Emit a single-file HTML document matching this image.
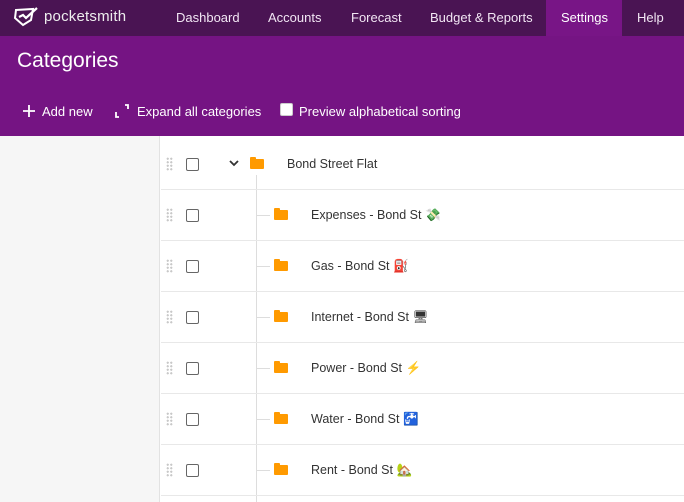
<!DOCTYPE html>
<html><head><style>
*{box-sizing:border-box;margin:0;padding:0}
body{width:684px;height:502px;overflow:hidden;font-family:"Liberation Sans",sans-serif;background:#fff;position:relative}
.nav{position:absolute;top:0;left:0;width:684px;height:36px;background:#4a1453;color:#f2e6f4;font-size:13px}
.nav span{position:absolute;top:10px}
.set{position:absolute;left:546px;top:0;width:76px;height:36px;background:#781586}
.hdr{position:absolute;top:36px;left:0;width:684px;height:100px;background:#751483;color:#fff}
.side{position:absolute;top:136px;left:0;width:160px;height:366px;background:#f6f6f6;border-right:1px solid #e2e2e2}
.row{position:absolute;left:161px;width:523px;height:51px;border-bottom:1px solid #e8e8e8;font-size:12.5px;color:#333}
.grip{position:absolute;left:5px;top:18px;width:7px;height:14px;background-image:radial-gradient(circle,#c8c8c8 1px,transparent 1.2px);background-size:3.5px 3.5px}
.cb{position:absolute;left:25px;top:19px;width:13px;height:13px;border:1px solid #666;border-radius:2px;background:#fff}
.fold{position:absolute;top:20px;width:14px;height:10px;background:#ff9a00;border-radius:1px}
.fold:before{content:"";position:absolute;left:0;top:-2px;width:6px;height:3px;background:#ff9a00;border-radius:1px 1px 0 0}
.t{position:absolute;top:18px}
.conn{position:absolute;left:95px;top:25px;width:14px;height:1px;background:#ddd}
</style></head><body>
<div class="nav">
<div class="set"></div>
<svg style="position:absolute;left:13px;top:6px" width="28" height="22" viewBox="0 0 28 22"><path d="M3 4 L20 3 L18 14 L10 19 L2 12 Z" fill="none" stroke="#fff" stroke-width="2"/><path d="M6 11 L10 9 L13 12 L24 2" fill="none" stroke="#fff" stroke-width="2.2"/></svg>
<span style="left:44px;top:8px;font-size:15px;color:#eee;letter-spacing:0.2px">pocketsmith</span>
<span style="left:176px">Dashboard</span><span style="left:268px">Accounts</span><span style="left:351px">Forecast</span><span style="left:430px">Budget &amp; Reports</span><span style="left:561px;color:#fff">Settings</span><span style="left:637px">Help</span>
</div>
<div class="hdr">
<div style="position:absolute;left:17px;top:13px;font-size:21px">Categories</div>
<svg style="position:absolute;left:23px;top:69px" width="12" height="12"><path d="M6 0 V12 M0 6 H12" stroke="#fff" stroke-width="1.8"/></svg>
<div style="position:absolute;left:42px;top:68px;font-size:13px">Add new</div>
<svg style="position:absolute;left:115px;top:68px" width="14" height="14"><path d="M1 8 V13 H4 M10 1 H13 V5" fill="none" stroke="#fff" stroke-width="1.8"/></svg>
<div style="position:absolute;left:137px;top:68px;font-size:13px">Expand all categories</div>
<div style="position:absolute;left:280px;top:67px;width:13px;height:13px;background:#fff;border:1px solid #ccc;border-radius:2px"></div>
<div style="position:absolute;left:299px;top:68px;font-size:13px">Preview alphabetical sorting</div>
</div>
<div class="side"></div>
<div style="position:absolute;left:256px;top:175px;width:1px;height:327px;background:#ddd"></div>
<div class="row" style="top:139px"><div class="grip"></div><div class="cb"></div>
<svg style="position:absolute;left:68px;top:21px" width="10" height="8"><path d="M1 1 L5 5 L9 1" fill="none" stroke="#333" stroke-width="1.8"/></svg>
<div class="fold" style="left:89px"></div><div class="t" style="left:126px">Bond Street Flat</div></div>
<div class="row" style="top:190px"><div class="grip"></div><div class="cb"></div><div class="conn"></div><div class="fold" style="left:113px"></div><div class="t" style="left:150px">Expenses - Bond St <span style="color:#2c9">💸</span></div></div>
<div class="row" style="top:241px"><div class="grip"></div><div class="cb"></div><div class="conn"></div><div class="fold" style="left:113px"></div><div class="t" style="left:150px">Gas - Bond St <span style="color:#d00">⛽</span></div></div>
<div class="row" style="top:292px"><div class="grip"></div><div class="cb"></div><div class="conn"></div><div class="fold" style="left:113px"></div><div class="t" style="left:150px">Internet - Bond St <span>🖥</span></div></div>
<div class="row" style="top:343px"><div class="grip"></div><div class="cb"></div><div class="conn"></div><div class="fold" style="left:113px"></div><div class="t" style="left:150px">Power - Bond St <span style="color:#fb0">⚡</span></div></div>
<div class="row" style="top:394px"><div class="grip"></div><div class="cb"></div><div class="conn"></div><div class="fold" style="left:113px"></div><div class="t" style="left:150px">Water - Bond St <span style="color:#8ac">🚰</span></div></div>
<div class="row" style="top:445px"><div class="grip"></div><div class="cb"></div><div class="conn"></div><div class="fold" style="left:113px"></div><div class="t" style="left:150px">Rent - Bond St <span style="color:#6a4">🏡</span></div></div>
</body></html>
